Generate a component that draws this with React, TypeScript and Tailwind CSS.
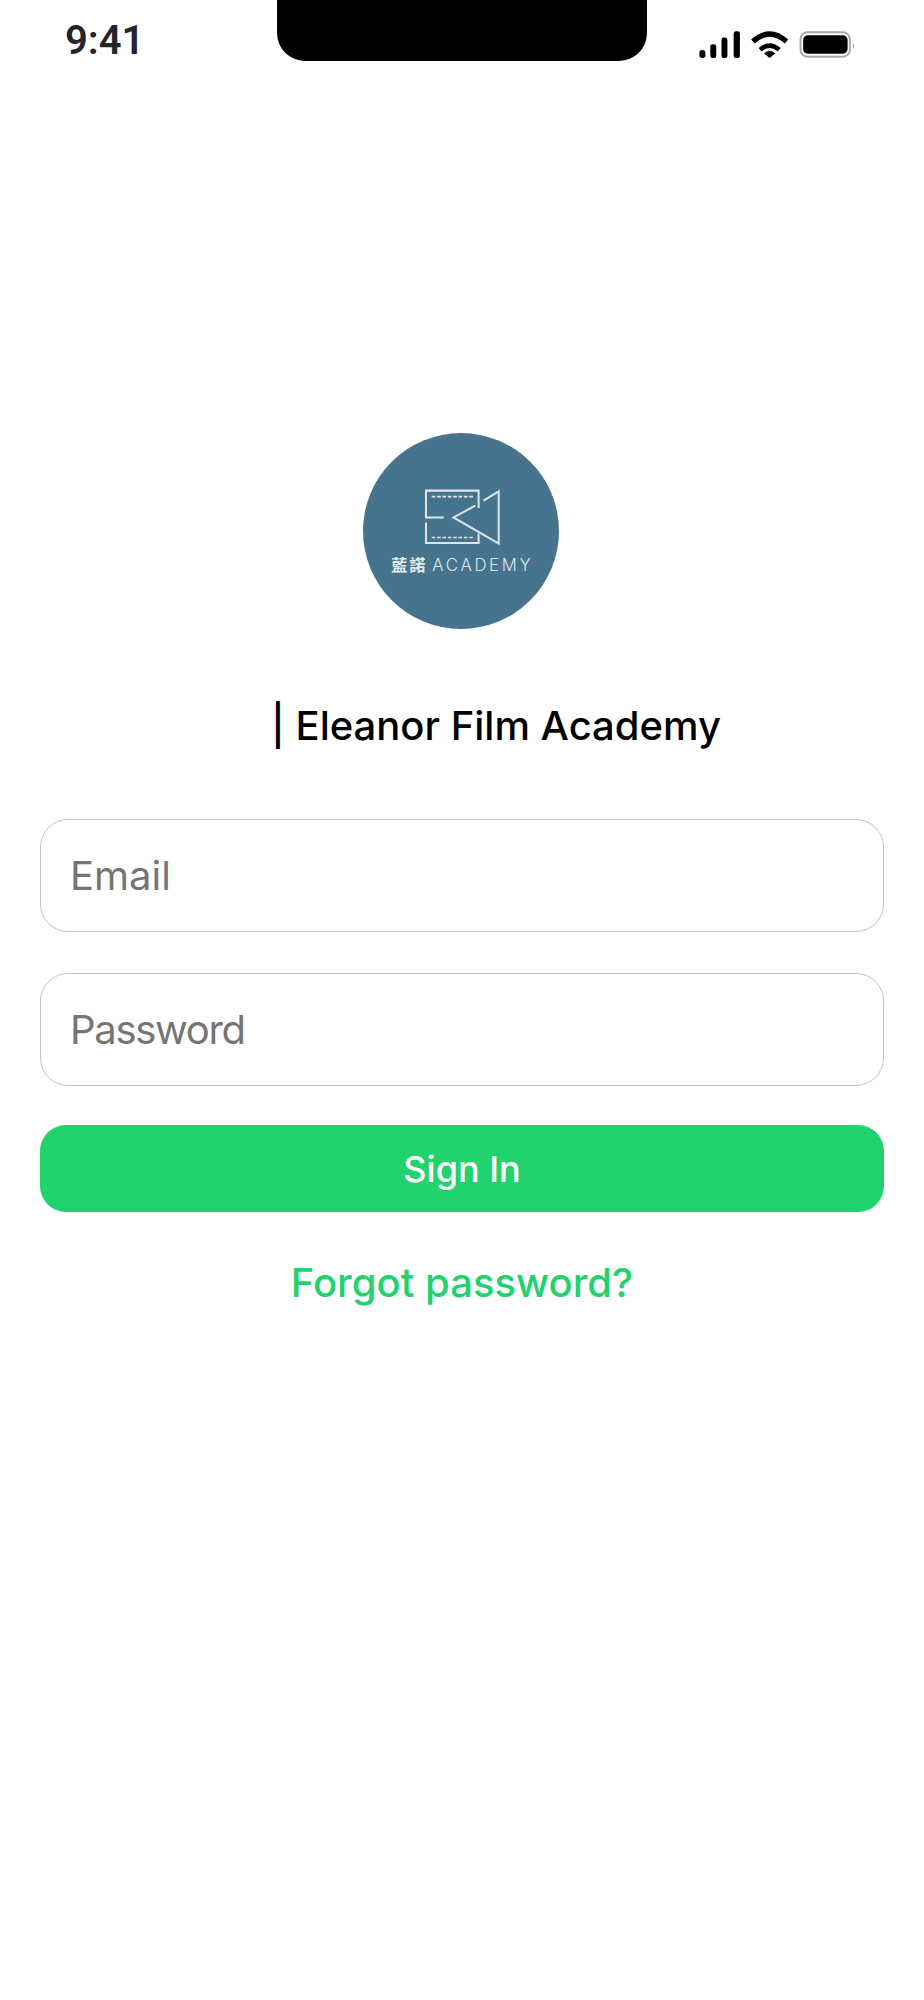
import React from 'react';

const FONT = 'font-["Inter",sans-serif]';

function Signal() {
  return (
    <svg width="42" height="27" viewBox="87 60 125 82" fill="#000">
      <rect x="87" y="118" width="18" height="24" rx="8" />
      <rect x="120" y="100" width="18" height="42" rx="7" />
      <rect x="154" y="80" width="18" height="62" rx="7" />
      <rect x="191" y="61" width="19" height="81" rx="7" />
    </svg>
  );
}

function Wifi() {
  return (
    <svg width="40" height="27" viewBox="240 60 120 82" fill="none" stroke="#000">
      <path d="M248 92 Q299 46 350 92" strokeWidth="16" />
      <path d="M270 117 Q299 92 328 117" strokeWidth="14" />
      <path d="M282 128 Q299 114 316 128 L299 142 Z" fill="#000" stroke="none" />
    </svg>
  );
}

function Battery() {
  return (
    <svg width="57" height="27" viewBox="392 60 172 82">
      <rect x="396" y="64" width="150" height="74" rx="21" fill="none" stroke="#a8a8a8" strokeWidth="6" />
      <rect x="404" y="73" width="135" height="56" rx="14" fill="#000" />
      <path d="M555 95 Q563 105 555 116 Z" fill="#a8a8a8" />
    </svg>
  );
}

function Logo() {
  return (
    <svg width="196" height="196" viewBox="40 38 585 585" className="block">
      <circle cx="332.5" cy="330.5" r="292.5" fill="#46748e" />
      <g fill="none" stroke="#dde5ea" strokeWidth="6">
        <path d="M281 290 H228 V210 H385 V262" />
        <path d="M228 305 V366 H385 V338" />
        <path d="M375 255 L310 290 L445 368 V212 L400 240" />
        <path d="M245 228 H370" strokeDasharray="11 5" strokeWidth="5" />
        <path d="M245 350 H370" strokeDasharray="11 5" strokeWidth="5" />
      </g>
      <text x="124" y="450" fill="#e6ecef" fontSize="48" fontWeight="700" letterSpacing="6" fontFamily="'Noto Sans CJK TC',sans-serif">藍諾</text>
      <text x="247" y="451" fill="#dde5ea" fontSize="50" fontWeight="300" letterSpacing="8" fontFamily="'Inter',sans-serif">ACADEMY</text>
    </svg>
  );
}

export default function App() {
  return (
    <div className={`min-h-[2000px] w-[924px] bg-white ${FONT}`}>
      {/* Status bar */}
      <div className="flex h-[61px] items-start">
        <span className="ml-[65px] mt-[16px] w-[212px] font-['Roboto',sans-serif] text-[40px] leading-[50px] font-semibold text-[#22252b]">9:41</span>
        <div className="h-[61px] w-[370px] rounded-b-[28px] bg-black" />
        <div className="ml-auto mr-[68px] mt-[31px] flex items-start gap-[9px]">
          <Signal />
          <Wifi />
          <Battery />
        </div>
      </div>

      <div className="mt-[372px] flex justify-center pr-[2px]">
        <Logo />
      </div>

      <h1 className="mt-[66px] pl-[68px] text-center text-[40px] leading-[62px] font-[550] text-black">
        | Eleanor Film Academy
      </h1>

      <form className="mt-[62px] flex flex-col px-[40px]">
        <input
          placeholder="Email"
          className="h-[113px] rounded-[28px] border border-[#c4c4c4] pl-[29px] pr-[29px] text-[40px] outline-none placeholder:text-[#757575]"
        />
        <input
          type="password"
          placeholder="Password"
          className="mt-[41px] h-[113px] rounded-[28px] border border-[#c4c4c4] pl-[29px] pr-[29px] text-[40px] tracking-[-1.3px] outline-none placeholder:text-[#757575]"
        />
        <button
          type="button"
          className="mt-[39px] h-[87px] rounded-[26px] bg-[#22d26d] text-[36px] font-medium text-white"
        >
          Sign In
        </button>
        <a className="mt-[45px] text-center text-[40px] leading-[52px] font-[550] text-[#22d26d]">Forgot password?</a>
      </form>
    </div>
  );
}
